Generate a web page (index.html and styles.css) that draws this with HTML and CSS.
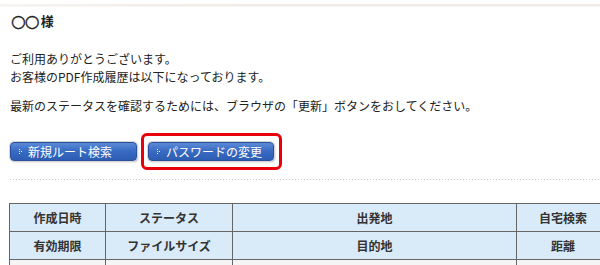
FILE: index.html
```html
<!DOCTYPE html>
<html lang="ja">
<head>
<meta charset="utf-8">
<link rel="stylesheet" href="styles.css">
</head>
<body>
<div class="topbar"></div>
<div class="content">
  <h1 class="name"><span class="circles">○○</span>様</h1>
  <p class="intro">ご利用ありがとうございます。<br>お客様のPDF作成履歴は以下になっております。</p>
  <p class="note">最新のステータスを確認するためには、ブラウザの「更新」ボタンをおしてください。</p>
  <div class="actions">
    <a class="btn" href="#"><svg class="dots-icon" width="4" height="5" viewBox="0 0 4 5"><rect x="0" y="0" width="1" height="1" fill="#fff"/><rect x="0" y="4" width="1" height="1" fill="#fff"/><rect x="2" y="2" width="1" height="1" fill="#fff"/><rect x="0" y="2" width="1" height="1" fill="#cfdcf2"/></svg>新規ルート検索</a>
    <div class="highlight">
      <a class="btn" href="#"><svg class="dots-icon" width="4" height="5" viewBox="0 0 4 5"><rect x="0" y="0" width="1" height="1" fill="#fff"/><rect x="0" y="4" width="1" height="1" fill="#fff"/><rect x="2" y="2" width="1" height="1" fill="#fff"/><rect x="0" y="2" width="1" height="1" fill="#cfdcf2"/></svg>パスワードの変更</a>
    </div>
  </div>
  <div class="divider"></div>
  <table class="history">
    <colgroup>
      <col class="c1"><col class="c2"><col class="c3"><col class="c4">
    </colgroup>
    <tr class="head">
      <th>作成日時</th><th>ステータス</th><th>出発地</th><th>自宅検索</th>
    </tr>
    <tr class="head">
      <th>有効期限</th><th>ファイルサイズ</th><th>目的地</th><th>距離</th>
    </tr>
    <tr class="row">
      <td></td><td></td><td></td><td></td>
    </tr>
  </table>
</div>
</body>
</html>
```
FILE: styles.css
```css
html, body {
  margin: 0;
  padding: 0;
  background: #fff;
  overflow: hidden;
}
body {
  width: 600px;
  height: 265px;
  font-family: "Noto Sans CJK JP", "DejaVu Sans", sans-serif;
  font-size: 12px;
  color: #222;
}
.topbar {
  margin-top: 4px;
  height: 2px;
  background: linear-gradient(to right, #f7f3f0 0%, #f1ebe6 40%, #f1ebe6 100%);
  border-bottom: 1px solid #f8f6f4;
}
.content {
  padding-left: 10px;
}
.name {
  margin: 6px 0 0 1px;
  font-size: 13px;
  line-height: 16px;
  height: 16px;
  font-weight: bold;
  color: #222;
  display: flex;
  align-items: center;
}
.circles {
  font-family: "DejaVu Sans", sans-serif;
  font-size: 17px;
  font-weight: bold;
  letter-spacing: -1px;
  margin-right: 2px;
  -webkit-text-stroke: 0.4px #222;
}
.intro {
  margin: 21px 0 0;
  line-height: 18px;
}
.note {
  margin: 11px 0 0;
  line-height: 18px;
}
.actions {
  margin-top: 18px;
  display: flex;
  align-items: center;
  gap: 4px;
}
.btn {
  display: flex;
  align-items: center;
  box-sizing: border-box;
  width: 127px;
  height: 19px;
  padding-left: 8px;
  border: 1px solid #2b4f9c;
  border-radius: 4px;
  background: linear-gradient(to bottom, #5b8ad6 0%, #3a6cc4 45%, #2d5cb3 100%);
  box-shadow: 0 0 0 1px #d6d6d6, 1px 1px 2px #b5b5b5;
  color: #fff;
  font-size: 12px;
  line-height: 17px;
  text-decoration: none;
}
.dots-icon {
  flex: none;
  margin-right: 5px;
}
.highlight {
  padding: 6px 5px 6px 4px;
  border: 3px solid #e8000b;
  border-radius: 6px;
}
.highlight .btn {
  width: 126px;
}
.divider {
  margin-top: 9px;
  height: 1px;
  background-image: linear-gradient(to right, #c8c8c8 0 1px, transparent 1px 3px);
  background-size: 3px 1px;
}
.history {
  margin-top: 23px;
  margin-left: -1px;
  border-collapse: collapse;
  table-layout: fixed;
  width: 600px;
}
.c1 { width: 96px; }
.c2 { width: 127px; }
.c3 { width: 284px; }
.c4 { width: 93px; }
.history th,
.history td {
  border: 1px solid #666;
  padding: 0;
  height: 27px;
  text-align: center;
  font-weight: bold;
  font-size: 12px;
  color: #333;
}
.head th {
  background: #d9eaf8;
}
.row td {
  background: #f5f5f5;
}
```
